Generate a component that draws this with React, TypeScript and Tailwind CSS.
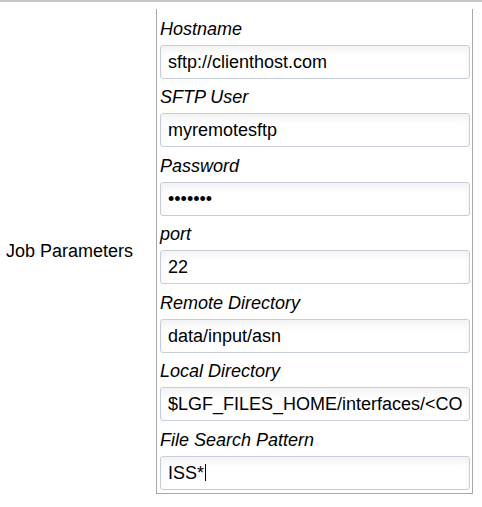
import React from "react";

const fields: { label: string; value: string; caret?: boolean }[] = [
  { label: "Hostname", value: "sftp://clienthost.com" },
  { label: "SFTP User", value: "myremotesftp" },
  { label: "Password", value: "•••••••" },
  { label: "port", value: "22" },
  { label: "Remote Directory", value: "data/input/asn" },
  { label: "Local Directory", value: "$LGF_FILES_HOME/interfaces/<CO" },
  { label: "File Search Pattern", value: "ISS*", caret: true },
];

export default function App() {
  return (
    <div className="w-[482px] h-[507px] bg-white text-black font-['Liberation_Sans',Arial,sans-serif] text-[18px]">
      <div className="h-[2px] bg-[#c8c8c0]" />
      <div className="flex mt-[7px]">
        <div className="w-[156px] flex items-center pl-[6px] leading-[20px]">Job Parameters</div>
        <div className="w-[317px] border-l border-r border-b border-[#a8a8a8] pt-[1px] pl-[3px] pr-[2px] pb-[3px]">
          {fields.map((f) => (
            <div key={f.label}>
              <div className="italic mt-[8.5px] mb-[6px] leading-[20px] text-black">{f.label}</div>
              <div className="h-[34px] w-[310px] rounded-[3px] border border-[#c5ced8] bg-white shadow-[inset_0_5px_7px_rgba(0,0,0,0.05)] flex items-center pl-[7px] overflow-hidden whitespace-nowrap leading-[20px]">
                <span>{f.value}</span>
                {f.caret && <span className="inline-block w-[1px] h-[17px] bg-black ml-[1px]" />}
              </div>
            </div>
          ))}
        </div>
      </div>
    </div>
  );
}
